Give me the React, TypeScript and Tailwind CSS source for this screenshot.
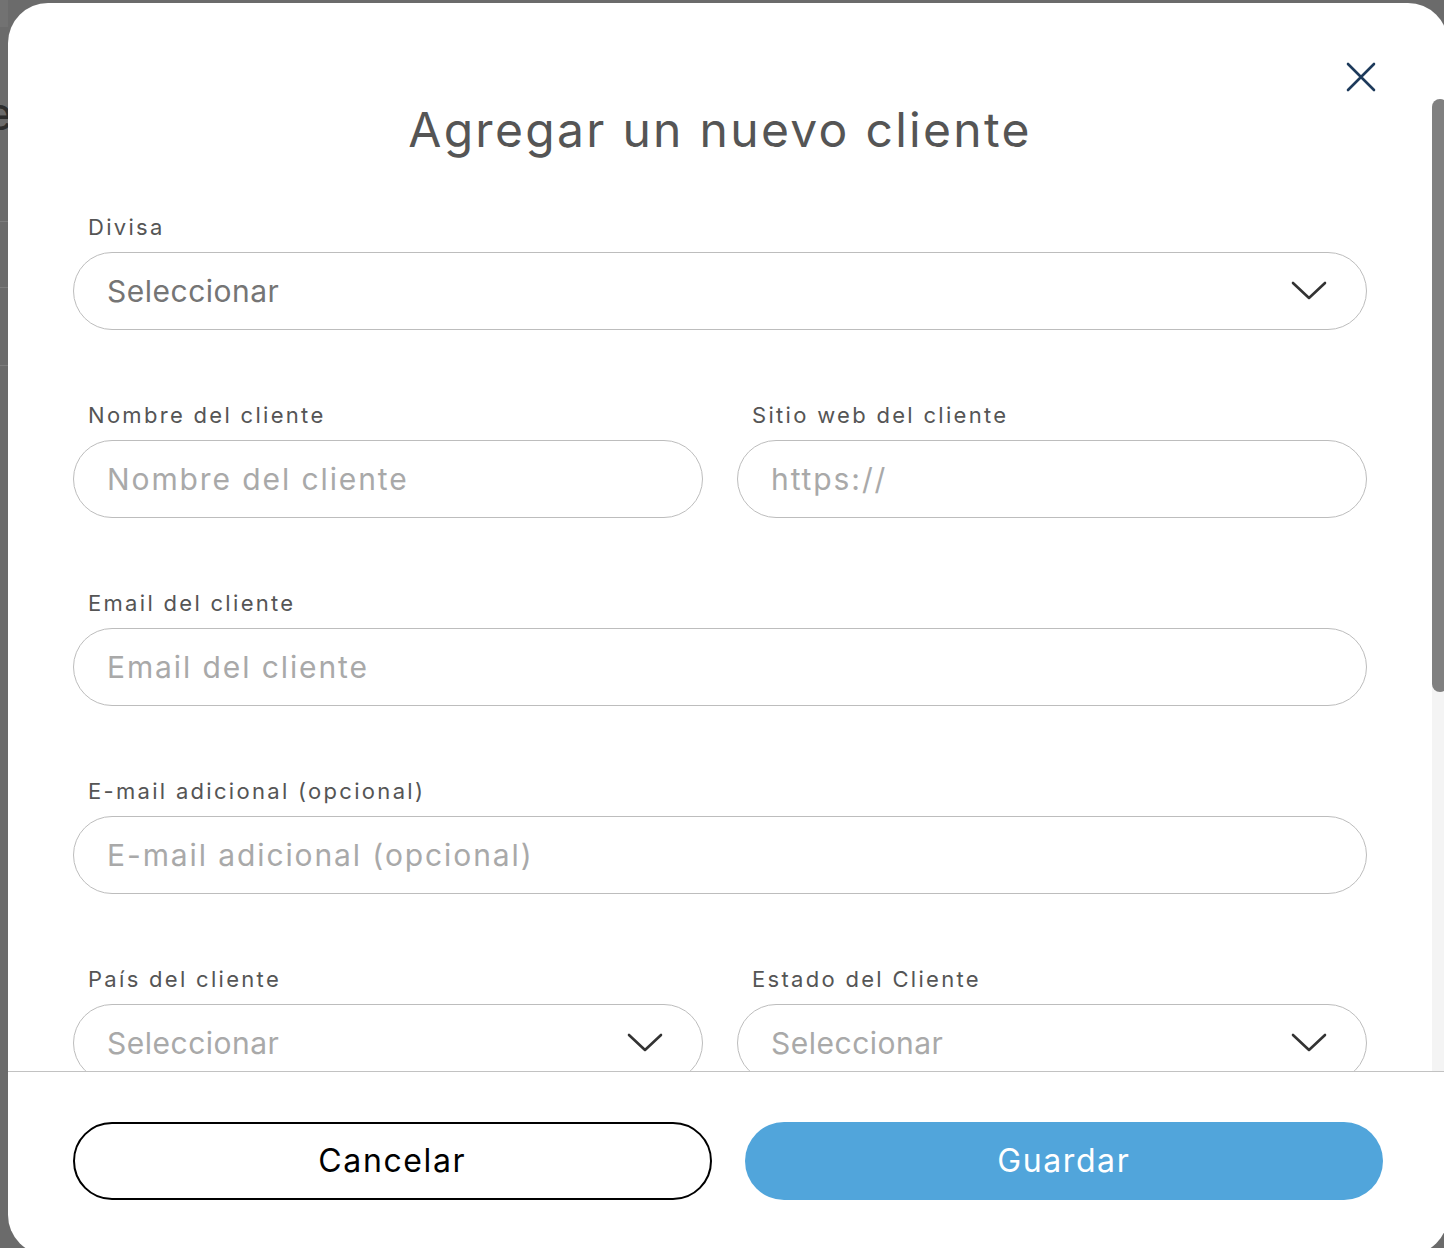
import React from 'react'

const font = "font-['Inter','Liberation_Sans',sans-serif]"

function Chevron() {
  return (
    <svg width="36" height="20" viewBox="0 0 36 20" fill="none" className="shrink-0">
      <path d="M2 2 L18 17 L34 2" stroke="#333333" strokeWidth="2.6" strokeLinecap="round" strokeLinejoin="round" />
    </svg>
  )
}

function Label({ children }: { children: React.ReactNode }) {
  return (
    <label className="mb-[11px] block pl-[15px] text-[22px] leading-[28px] tracking-[2.3px] text-[#555555]">
      {children}
    </label>
  )
}

function TextField({ label, placeholder }: { label: string; placeholder: string }) {
  return (
    <div>
      <Label>{label}</Label>
      <input
        placeholder={placeholder}
        className="h-[78px] w-full rounded-full border-[1.5px] border-[#bdbdbd] bg-white px-[33px] text-[30px] tracking-[1.9px] text-[#333] outline-none placeholder:text-[#a9a9a9]"
      />
    </div>
  )
}

function SelectField({ label, dark }: { label: string; dark?: boolean }) {
  return (
    <div>
      <Label>{label}</Label>
      <div className="flex h-[78px] w-full items-center justify-between rounded-full border-[1.5px] border-[#bdbdbd] bg-white pl-[33px] pr-[39px]">
        <span className={`text-[30px] tracking-[0.5px] ${dark ? 'text-[#757575]' : 'text-[#a9a9a9]'}`}>
          Seleccionar
        </span>
        <Chevron />
      </div>
    </div>
  )
}

export default function App() {
  return (
    <div className={`relative h-[1248px] w-[1444px] overflow-hidden bg-[#6b6b6b] ${font}`}>
      {/* page behind the overlay */}
      <div className="absolute left-0 top-0 h-[27px] w-[8px] bg-[#727272]" />
      <div className="absolute left-[-14px] top-[90px] text-[46px] leading-none text-[#2e2e2e]">e</div>
      <div className="absolute left-0 top-[221px] h-px w-[8px] bg-[#7d7d7d]" />
      <div className="absolute left-0 top-[287px] h-px w-[8px] bg-[#7d7d7d]" />
      <div className="absolute left-0 top-[365px] h-px w-[8px] bg-[#7d7d7d]" />

      <div className="absolute left-[8px] top-[3px] flex h-[1252px] w-[1440px] flex-col overflow-hidden rounded-[40px] bg-white">
        <div className="relative flex h-[1068px] overflow-hidden">
          <div className="flex-1 px-[65px] pt-[95px]">
            <button className="absolute right-[70px] top-[57px] p-[2px]" aria-label="Cerrar">
              <svg width="30" height="30" viewBox="0 0 30 30" fill="none">
                <path d="M2 2 L28 28 M28 2 L2 28" stroke="#1d3a5b" strokeWidth="2.6" strokeLinecap="round" />
              </svg>
            </button>
            <h2 className="text-center text-[48px] leading-[64px] tracking-[2.3px] text-[#555555]">
              Agregar un nuevo cliente
            </h2>
            <div className="mt-[51px] flex flex-col gap-[71px]">
              <SelectField label="Divisa" dark />
              <div className="grid grid-cols-2 gap-x-[34px]">
                <TextField label="Nombre del cliente" placeholder="Nombre del cliente" />
                <TextField label="Sitio web del cliente" placeholder="https://" />
              </div>
              <TextField label="Email del cliente" placeholder="Email del cliente" />
              <TextField label="E-mail adicional (opcional)" placeholder="E-mail adicional (opcional)" />
              <div className="grid grid-cols-2 gap-x-[34px]">
                <SelectField label="País del cliente" />
                <SelectField label="Estado del Cliente" />
              </div>
            </div>
          </div>
          <div className="flex w-[16px] flex-col pt-[96px]">
            <div className="flex-1 rounded-t-full bg-[#f4f4f4]">
              <div className="h-[593px] rounded-full bg-[#808080]" />
            </div>
          </div>
        </div>
        <div className="flex-1 border-t-[1.5px] border-[#c2c2c2] px-[65px] pt-[50px]">
          <div className="grid grid-cols-2 gap-x-[33px]">
            <button className="h-[78px] rounded-full border-2 border-black bg-white text-[32px] tracking-[1.6px] text-black">
              Cancelar
            </button>
            <button className="h-[78px] rounded-full bg-[#51a5db] text-[32px] tracking-[1.6px] text-white">
              Guardar
            </button>
          </div>
        </div>
      </div>
    </div>
  )
}
